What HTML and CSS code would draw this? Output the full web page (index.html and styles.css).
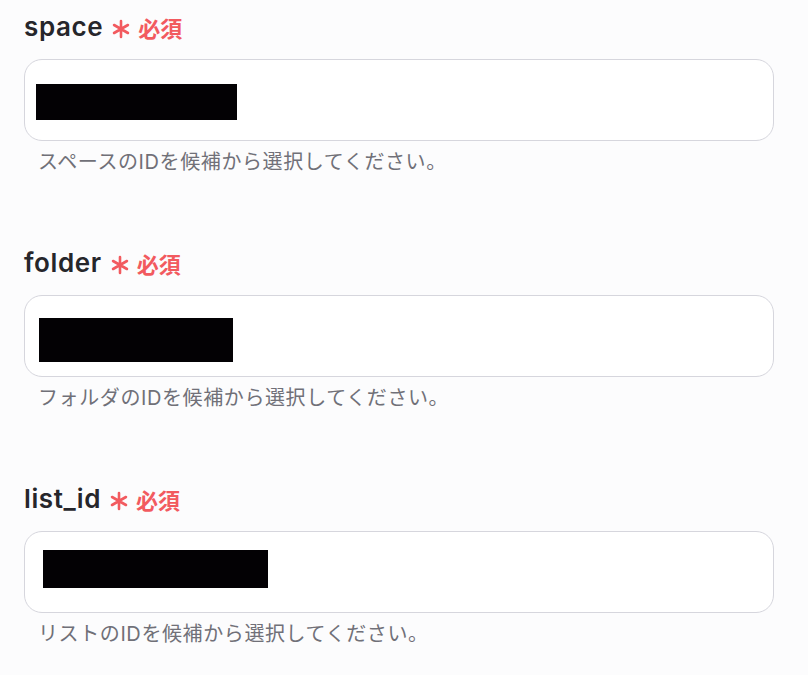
FILE: index.html
```html
<!DOCTYPE html>
<html lang="ja">
<head>
    <meta charset="UTF-8">
    <title>設定</title>
    <link rel="stylesheet" href="styles.css">
</head>
<body>
    <div class="form">

        <!-- space -->
        <div class="field">
            <div class="label">
                <span class="name">space</span>
                <svg class="star" viewBox="0 0 20 20"><path d="M10 2v16M3.07 6l13.86 8M3.07 14l13.86-8"/></svg>
                <span class="required">必須</span>
            </div>
            <div class="box box-space"><span class="mask"></span></div>
            <p class="help">スペースのIDを候補から選択してください。</p>
        </div>

        <!-- folder -->
        <div class="field">
            <div class="label">
                <span class="name">folder</span>
                <svg class="star" viewBox="0 0 20 20"><path d="M10 2v16M3.07 6l13.86 8M3.07 14l13.86-8"/></svg>
                <span class="required">必須</span>
            </div>
            <div class="box box-folder"><span class="mask"></span></div>
            <p class="help">フォルダのIDを候補から選択してください。</p>
        </div>

        <!-- list_id -->
        <div class="field">
            <div class="label">
                <span class="name">list_id</span>
                <svg class="star" viewBox="0 0 20 20"><path d="M10 2v16M3.07 6l13.86 8M3.07 14l13.86-8"/></svg>
                <span class="required">必須</span>
            </div>
            <div class="box box-list"><span class="mask"></span></div>
            <p class="help">リストのIDを候補から選択してください。</p>
        </div>

    </div>
</body>
</html>
```

FILE: styles.css
```css
body {
    margin: 0;
    background-color: #fcfcfd;
    font-family: Inter, "Noto Sans CJK JP", sans-serif;
}

.form {
    padding: 8px 0 0 24px;
    width: 750px;
}

.field {
    margin-bottom: 70px;
}

.field:last-child {
    margin-bottom: 0;
}

.label {
    display: flex;
    align-items: center;
    height: 36px;
    margin-bottom: 15px;
}

.name {
    font-size: 26px;
    font-weight: 600;
    letter-spacing: 0.6px;
    color: #26262b;
    margin-right: 8px;
}

.star {
    width: 20px;
    height: 20px;
    margin-top: 6px;
    margin-right: 7px;
    fill: none;
    stroke: #f25a5f;
    stroke-width: 2.6;
    stroke-linecap: round;
}

.required {
    font-size: 22px;
    font-weight: 700;
    color: #f25a5f;
    margin-top: 2px;
}

.box {
    height: 82px;
    box-sizing: border-box;
    border: 1px solid #d6d6dd;
    border-radius: 18px;
    background-color: #ffffff;
}

.mask {
    display: block;
    background-color: #030104;
}

.box-space .mask {
    margin: 24px 0 0 11px;
    width: 201px;
    height: 36px;
}

.box-folder .mask {
    margin: 22px 0 0 14px;
    width: 194px;
    height: 44px;
}

.box-list .mask {
    margin: 18px 0 0 18px;
    width: 225px;
    height: 38px;
}

.help {
    margin: 9px 0 0 14px;
    font-size: 20px;
    line-height: 24px;
    letter-spacing: 0.6px;
    color: #707078;
}
```
